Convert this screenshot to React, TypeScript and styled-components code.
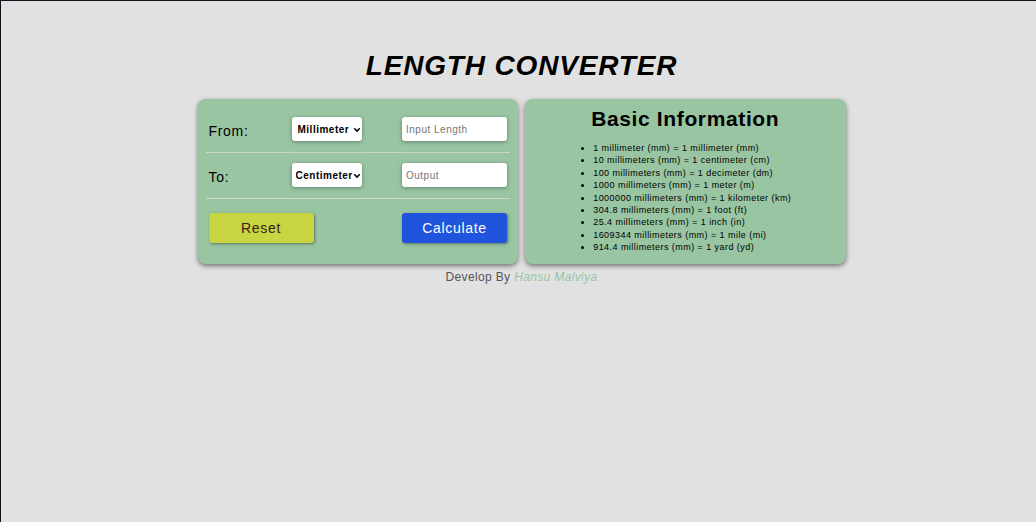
import React, { useState } from "react";
import styled, { createGlobalStyle } from "styled-components";

const GlobalStyle = createGlobalStyle`
  * {
    box-sizing: border-box;
    letter-spacing: 0.05em;
  }
  h1, h2, footer, footer * { letter-spacing: 0.03em; }
  body {
    margin: 0;
    background: #e1e1e1;
    color: #000;
    font-family: "Liberation Sans", Arial, sans-serif;
  }
`;

const Page = styled.div`
  min-height: 100vh;
  padding: 48px 0 0 6px;
  border-top: 1px solid #10101c;
  border-left: 1px solid #10101c;
  display: flex;
  flex-direction: column;
  align-items: center;
`;

const Title = styled.h1`
  margin: 0 0 16px;
  font-size: 28px;
  line-height: 34px;
  font-style: italic;
  text-align: center;
`;

const Panels = styled.main`
  display: grid;
  grid-template-columns: 1fr 1fr;
  gap: 7px;
  width: 100%;
  max-width: 648px;
`;

const Panel = styled.section`
  padding: 8px;
  border-radius: 8px;
  background: #99c5a2;
  box-shadow: 0 2px 5px rgba(0, 0, 0, 0.5);
`;

const InfoPanel = styled(Panel)`
  display: flex;
  flex-direction: column;
  align-items: center;
`;

const Row = styled.div`
  display: grid;
  grid-template-columns: 83px 1fr 105px;
  align-items: center;
  min-height: 46px;
  padding: 0 3px 1px;
  border-bottom: 1px solid #c9d8cc;
`;

const Actions = styled.div`
  display: flex;
  justify-content: space-between;
  align-items: center;
  min-height: 57px;
  padding: 0 3px;
`;

const Label = styled.label`
  padding-top: 4px;
  font-size: 14px;
  line-height: 16px;
`;

const SelectBox = styled.div`
  position: relative;
  width: 70px;
`;

const Select = styled.select<{ $indent: number }>`
  appearance: none;
  display: block;
  width: 100%;
  height: 24px;
  padding: 0 0 0 ${(p) => p.$indent}px;
  border: 0;
  border-radius: 3px;
  background: #fff;
  color: #000;
  font: bold 10px "Liberation Sans", Arial, sans-serif;
  box-shadow: 0 1px 4px rgba(0, 0, 0, 0.35);
`;

const Chevron = styled.svg`
  position: absolute;
  right: 1px;
  top: 10px;
  width: 8px;
  height: 6px;
  pointer-events: none;
`;

const Field = styled.input`
  width: 100%;
  height: 24px;
  padding: 0 4px;
  border: 0;
  border-radius: 3px;
  background: #fff;
  font: 10px "Liberation Sans", Arial, sans-serif;
  box-shadow: 0 1px 4px rgba(0, 0, 0, 0.35);
  &::placeholder { color: #757575; }
`;

const Button = styled.button<{ $primary?: boolean }>`
  width: 105px;
  height: 30px;
  padding: 0;
  border: 0;
  border-radius: 3px;
  background: ${(p) => (p.$primary ? "#2054dc" : "#c6d540")};
  color: ${(p) => (p.$primary ? "#fff" : "#3b2020")};
  font: 14px "Liberation Sans", Arial, sans-serif;
  box-shadow: 1px 1px 3px rgba(0, 0, 0, 0.4);
`;

const InfoTitle = styled.h2`
  margin: 0 0 11px;
  font-size: 21px;
  line-height: 24px;
`;

const Facts = styled.ul`
  flex: 1;
  display: flex;
  flex-direction: column;
  justify-content: space-between;
  margin: 0;
  padding: 0 0 3px 14px;
  font-size: 9px;
  line-height: 12px;
`;

const Credit = styled.footer`
  margin-top: 5px;
  font-size: 12px;
  line-height: 16px;
  color: #555;
`;

const Author = styled.a`
  color: #99c5a2;
  font-style: italic;
  text-decoration: none;
`;

const metres: Record<string, number> = {
  Millimeter: 0.001,
  Centimeter: 0.01,
  Decimeter: 0.1,
  Meter: 1,
  Kilometer: 1000,
  Foot: 0.3048,
  Inch: 0.0254,
  Mile: 1609.344,
  Yard: 0.9144,
};

const facts = [
  "1 millimeter (mm) = 1 millimeter (mm)",
  "10 millimeters (mm) = 1 centimeter (cm)",
  "100 millimeters (mm) = 1 decimeter (dm)",
  "1000 millimeters (mm) = 1 meter (m)",
  "1000000 millimeters (mm) = 1 kilometer (km)",
  "304.8 millimeters (mm) = 1 foot (ft)",
  "25.4 millimeters (mm) = 1 inch (in)",
  "1609344 millimeters (mm) = 1 mile (mi)",
  "914.4 millimeters (mm) = 1 yard (yd)",
];

type UnitSelectProps = {
  id: string;
  value: string;
  indent: number;
  onChange: (unit: string) => void;
};

function UnitSelect({ id, value, indent, onChange }: UnitSelectProps) {
  return (
    <SelectBox>
      <Select id={id} value={value} $indent={indent} onChange={(e) => onChange(e.target.value)}>
        {Object.keys(metres).map((unit) => (
          <option key={unit}>{unit}</option>
        ))}
      </Select>
      <Chevron viewBox="0 0 8 6" aria-hidden="true">
        <path d="M1.2 1.3 4 4.1 6.8 1.3" fill="none" stroke="#000" strokeWidth="1.5" />
      </Chevron>
    </SelectBox>
  );
}

export default function App() {
  const [from, setFrom] = useState("Millimeter");
  const [to, setTo] = useState("Centimeter");
  const [length, setLength] = useState("");
  const [output, setOutput] = useState("");

  const calculate = () => {
    const n = parseFloat(length);
    setOutput(Number.isNaN(n) ? "" : String((n * metres[from]) / metres[to]));
  };
  const reset = () => {
    setLength("");
    setOutput("");
  };

  return (
    <Page>
      <GlobalStyle />
      <Title>LENGTH CONVERTER</Title>
      <Panels>
        <Panel>
          <Row>
            <Label htmlFor="from">From:</Label>
            <UnitSelect id="from" value={from} indent={6} onChange={setFrom} />
            <Field
              aria-label="Input Length"
              placeholder="Input Length"
              value={length}
              onChange={(e) => setLength(e.target.value)}
            />
          </Row>
          <Row>
            <Label htmlFor="to">To:</Label>
            <UnitSelect id="to" value={to} indent={4} onChange={setTo} />
            <Field aria-label="Output" placeholder="Output" value={output} readOnly />
          </Row>
          <Actions>
            <Button type="button" onClick={reset}>Reset</Button>
            <Button type="button" $primary onClick={calculate}>Calculate</Button>
          </Actions>
        </Panel>
        <InfoPanel>
          <InfoTitle>Basic Information</InfoTitle>
          <Facts>
            {facts.map((fact) => (
              <li key={fact}>{fact}</li>
            ))}
          </Facts>
        </InfoPanel>
      </Panels>
      <Credit>
        Develop By <Author href="#">Hansu Malviya</Author>
      </Credit>
    </Page>
  );
}
